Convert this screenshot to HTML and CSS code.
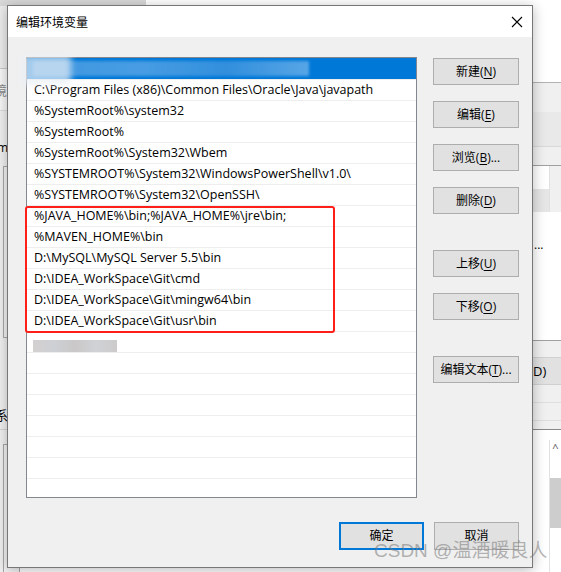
FILE: index.html
```html
<!DOCTYPE html>
<html lang="zh-CN">
<head>
<meta charset="utf-8">
<title>编辑环境变量</title>
<link rel="stylesheet" href="styles.css">
</head>
<body>
<div class="desk">
  <div class="bg-top"></div>

  <div class="bg-left">
    <div class="bl-a"></div>
    <div class="bl-b"><span class="bl-char">境</span></div>
    <div class="bl-c"><span class="bl-m">m</span></div>
    <div class="bl-box"></div>
    <div class="bl-d"><span class="bl-char2">系</span></div>
    <div class="bl-box2"></div>
  </div>

  <div class="bg-right">
    <div class="br-white"></div>
    <div class="br-band1"></div>
    <div class="br-band2"></div>
    <div class="br-band3"></div>
    <div class="br-tbl">
      <div class="br-cell"></div>
      <div class="br-cell alt"></div>
    </div>
    <div class="br-text"><span class="br-dots">...</span></div>
    <div class="br-strip"></div>
    <div class="br-btn">D)</div>
    <div class="br-lines"></div>
    <div class="br-bottom">
      <div class="br-scroll"><span class="br-arrow">^</span><div class="br-track"></div></div>
    </div>
  </div>

  <div class="dialog">
    <div class="titlebar">
      <span class="title">编辑环境变量</span>
      <svg class="close" width="12" height="12" viewBox="0 0 12 12"><path d="M1 1 L11 11 M11 1 L1 11" stroke="#000" stroke-width="1.1" fill="none"/></svg>
    </div>
    <div class="content">
      <div class="main">
        <div class="list">
          <div class="row sel"><span class="mosaic-sel"></span></div>
          <div class="row">C:\Program Files (x86)\Common Files\Oracle\Java\javapath</div>
          <div class="row">%SystemRoot%\system32</div>
          <div class="row">%SystemRoot%</div>
          <div class="row">%SystemRoot%\System32\Wbem</div>
          <div class="row">%SYSTEMROOT%\System32\WindowsPowerShell\v1.0\</div>
          <div class="row">%SYSTEMROOT%\System32\OpenSSH\</div>
          <div class="row">%JAVA_HOME%\bin;%JAVA_HOME%\jre\bin;</div>
          <div class="row">%MAVEN_HOME%\bin</div>
          <div class="row">D:\MySQL\MySQL Server 5.5\bin</div>
          <div class="row">D:\IDEA_WorkSpace\Git\cmd</div>
          <div class="row">D:\IDEA_WorkSpace\Git\mingw64\bin</div>
          <div class="row">D:\IDEA_WorkSpace\Git\usr\bin</div>
          <div class="row"><span class="mosaic-gray"></span></div>
          <div class="row"></div>
          <div class="row"></div>
          <div class="row"></div>
          <div class="row"></div>
          <div class="row"></div>
          <div class="row"></div>
          <div class="row"></div>
          <div class="row"></div>
          <span class="mosaic-halo"></span>
          <span class="redbox"></span>
        </div>
        <div class="side">
          <button class="btn">新建(<u>N</u>)</button>
          <button class="btn">编辑(<u>E</u>)</button>
          <button class="btn">浏览(<u>B</u>)...</button>
          <button class="btn">删除(<u>D</u>)</button>
          <button class="btn gap-big">上移(<u>U</u>)</button>
          <button class="btn">下移(<u>O</u>)</button>
          <button class="btn gap-big">编辑文本(<u>T</u>)...</button>
        </div>
      </div>
      <div class="footer">
        <button class="btn wide default">确定</button>
        <button class="btn wide">取消</button>
      </div>
    </div>
  </div>

  <div class="watermark">CSDN @温酒暖良人</div>
</div>
</body>
</html>
```

FILE: styles.css
```css
* { box-sizing: border-box; }
html, body { margin: 0; padding: 0; }
body {
  width: 561px;
  height: 572px;
  overflow: hidden;
  background: #fff;
  font-family: "Open Sans", "Noto Sans CJK SC", sans-serif;
  font-size: 12px;
  color: #000;
}
.desk { position: relative; width: 561px; height: 572px; overflow: hidden; background: #fff; }

/* background windows */
.bg-top { position: absolute; left: 0; top: 0; width: 146px; height: 6px; background: #d8d8d8; }

.bg-left { position: absolute; left: 0; top: 6px; width: 20px; height: 566px; background: #f0f0f0; display: flex; flex-direction: column; overflow: hidden; }
.bl-a { height: 63px; border-bottom: 1px solid #c9c9c9; background: #ececec; }
.bl-b { height: 42px; background: #f7f7f7; border-bottom: 1px solid #dcdcdc; position: relative; }
.bl-char { position: absolute; left: -6px; top: 14px; color: #8a8a8a; font-size: 13px; line-height: 14px; font-family: "Noto Sans CJK SC", sans-serif; }
.bl-c { height: 55px; position: relative; }
.bl-m { position: absolute; left: -3px; top: 30px; font-size: 12px; line-height: 14px; }
.bl-box { height: 172px; margin-left: 3px; border: 1px solid #a8a8a8; background: #f3f3f3; }
.bl-d { height: 92px; position: relative; border-bottom: 1px solid #d5d5d5; }
.bl-char2 { position: absolute; left: -5px; top: 70px; font-size: 13px; line-height: 14px; font-family: "Noto Sans CJK SC", sans-serif; }
.bl-box2 { flex: 1; margin-left: 3px; margin-top: 14px; border: 1px solid #a8a8a8; border-bottom: none; background: #f3f3f3; }

.bg-right { position: absolute; left: 533px; top: 0; width: 28px; height: 572px; background: #fff; display: flex; flex-direction: column; overflow: hidden; }
.br-white { height: 83px; background: #fff; border-bottom: 1px solid #b3b3b3; }
.br-band1 { height: 29px; background: #f0f0f0; }
.br-band2 { height: 35px; background: #e9e9e9; border-bottom: 1px solid #d9d9d9; }
.br-band3 { height: 19px; background: #f0f0f0; border-bottom: 1px solid #a0a0a0; }
.br-tbl { height: 46px; display: flex; flex-direction: column; background: #f0f0f0; padding-right: 11px; }
.br-cell { flex: 1; background: #fff; border-right: 1px solid #e0e0e0; }
.br-cell.alt { background: #e6e6e6; }
.br-text { height: 129px; background: #fff; position: relative; border-bottom: 1px solid #a0a0a0; }
.br-dots { position: absolute; left: 1px; top: 26px; font-size: 12px; line-height: 14px; }
.br-strip { height: 16px; background: #f0f0f0; }
.br-btn { height: 28px; background: #e1e1e1; border-top: 1px solid #d0d0d0; border-bottom: 1px solid #d0d0d0; font-size: 13px; line-height: 26px; padding-left: 0; }
.br-lines { height: 45px; background: #f0f0f0; border-bottom: 1px solid #888; background-image: linear-gradient(#f0f0f0 17px, #dedede 17px, #dedede 18px, #f0f0f0 18px, #f0f0f0 35px, #dedede 35px, #dedede 36px, #f0f0f0 36px); }
.br-bottom { flex: 1; background: #fff; display: flex; justify-content: flex-end; }
.br-scroll { width: 12px; margin-top: 10px; border-left: 1px solid #e2e2e2; position: relative; display: flex; flex-direction: column; }
.br-arrow { display: block; height: 16px; font-size: 11px; line-height: 16px; text-align: center; color: #555; }
.br-track { height: 50px; margin-top: 22px; background: #cdcdcd; }

/* dialog */
.dialog {
  position: absolute;
  left: 7px;
  top: 5px;
  width: 526px;
  height: 563px;
  border: 1px solid #777;
  background: #f0f0f0;
  box-shadow: 0 2px 12px rgba(0, 0, 0, 0.28);
  display: flex;
  flex-direction: column;
}
.titlebar {
  height: 31px;
  background: #fff;
  display: flex;
  align-items: center;
  justify-content: space-between;
  padding: 0 9px 0 8px;
}
.title { font-family: "Noto Sans CJK SC", sans-serif; font-size: 12px; line-height: 14px; margin-top: 1px; }
.close { display: block; margin-top: 0; }

.content { padding: 20px 13px 0 18px; display: flex; flex-direction: column; }
.main { display: flex; gap: 16px; align-items: flex-start; }

.list {
  position: relative;
  width: 391px;
  height: 441px;
  border: 1px solid #828790;
  background: #fff;
  overflow: visible;
}
.row {
  height: 21px;
  border-top: 1px solid #eeeeee;
  padding-left: 7px;
  font-size: 12.5px;
  line-height: 20px;
  white-space: nowrap;
  overflow: hidden;
  position: relative;
}
.row:first-child { border-top-color: #0078d7; }
.row:last-of-type { height: 20px; }
.row.sel { background: #0078d7; }
.mosaic-sel {
  position: absolute;
  left: 6px;
  top: 2px;
  width: 276px;
  height: 15px;
  background: linear-gradient(90deg, #4f9fe2 0%, #5aa6e6 40%, #3f95de 70%, #6db1ea 100%);
  filter: blur(1.5px);
  opacity: 0.8;
}
.mosaic-halo {
  position: absolute;
  left: -6px;
  top: -3px;
  width: 50px;
  height: 30px;
  background: rgba(235, 240, 245, 0.7);
  filter: blur(3px);
}
.mosaic-gray {
  position: absolute;
  left: 6px;
  top: 8px;
  width: 84px;
  height: 12px;
  background: linear-gradient(90deg, #d4d0cf 0%, #cdd0d5 25%, #cac8c8 50%, #d0d2d6 75%, #cccacb 100%);
  filter: blur(0.6px);
}
.redbox {
  position: absolute;
  left: -2px;
  top: 148px;
  width: 310px;
  height: 127px;
  border: 2.5px solid #ff1f1a;
  border-radius: 3px;
}

.side { width: 86px; display: flex; flex-direction: column; gap: 16px; padding-top: 1px; }
.btn {
  width: 86px;
  height: 27px;
  margin: 0;
  padding: 0;
  background: #e1e1e1;
  border: 1px solid #adadad;
  font-family: "Open Sans", "Noto Sans CJK SC", sans-serif;
  font-size: 12px;
  line-height: 14px;
  color: #000;
  display: flex;
  align-items: center;
  justify-content: center;
}
.btn u { text-underline-offset: 2px; }
.side .gap-big { margin-top: 20px; }

.footer { display: flex; justify-content: flex-end; gap: 10px; margin-top: 24px; padding-right: 0; }
.btn.wide { width: 85px; height: 28px; }
.btn.default { border: 2px solid #0078d7; }

.watermark {
  position: absolute;
  left: 374px;
  top: 540px;
  font-family: "Liberation Sans", "Noto Sans CJK SC", sans-serif;
  font-size: 19px;
  line-height: 22px;
  color: rgba(120, 120, 120, 0.55);
  white-space: nowrap;
}
```
